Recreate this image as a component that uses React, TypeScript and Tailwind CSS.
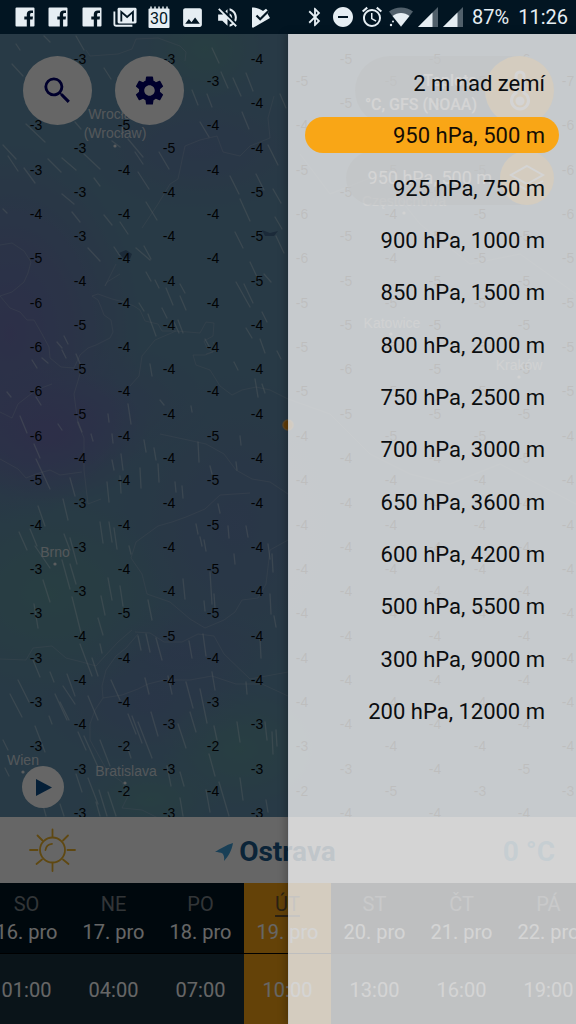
import React from "react";
import {
  MdAlarm,
  MdBluetooth,
  MdDoNotDisturbOn,
  MdImage,
  MdSearch,
  MdSettings,
  MdVolumeOff,
} from "react-icons/md";

const levels = [
  "2 m nad zemí",
  "950 hPa, 500 m",
  "925 hPa, 750 m",
  "900 hPa, 1000 m",
  "850 hPa, 1500 m",
  "800 hPa, 2000 m",
  "750 hPa, 2500 m",
  "700 hPa, 3000 m",
  "650 hPa, 3600 m",
  "600 hPa, 4200 m",
  "500 hPa, 5500 m",
  "300 hPa, 9000 m",
  "200 hPa, 12000 m",
];

const days = [
  { day: "SO", date: "16. pro", time: "01:00" },
  { day: "NE", date: "17. pro", time: "04:00" },
  { day: "PO", date: "18. pro", time: "07:00" },
  { day: "ÚT", date: "19. pro", time: "10:00", active: true },
  { day: "ST", date: "20. pro", time: "13:00" },
  { day: "ČT", date: "21. pro", time: "16:00" },
  { day: "PÁ", date: "22. pro", time: "19:00" },
];

// Temperature columns; every second column is shifted half a row down.
const columns: { x: number; y: number; first?: number; t: number[] }[] = [
  { x: 36, y: 47, first: 1, t: [3, 3, 4, 5, 6, 6, 6, 6, 5, 4, 3, 3, 3, 3, 3] },
  { x: 80, y: 25, t: [3, 3, 3, 3, 3, 4, 5, 5, 5, 4, 3, 3, 3, 4, 4, 4, 3, 3] },
  { x: 124, y: 47, t: [4, 5, 4, 4, 4, 4, 4, 4, 4, 4, 4, 4, 5, 4, 4, 2, 2] },
  { x: 169, y: 25, t: [3, 4, 5, 4, 4, 4, 4, 4, 4, 4, 4, 4, 4, 5, 4, 3, 3, 3] },
  { x: 213, y: 47, t: [3, 4, 4, 4, 4, 4, 4, 4, 5, 5, 5, 5, 5, 4, 3, 2, 4] },
  { x: 257, y: 25, t: [4, 4, 4, 5, 5, 5, 4, 4, 4, 4, 4, 4, 4, 4, 4, 3, 3, 3] },
  { x: 302, y: 47, t: [5, 4, 5, 6, 6, 5, 5, 5, 4, 4, 4, 4, 4, 4, 4, 3, 2] },
  { x: 346, y: 25, t: [5, 5, 5, 5, 5, 5, 5, 6, 5, 4, 4, 4, 4, 4, 4, 4, 3, 4] },
  { x: 391, y: 47, t: [5, 5, 5, 4, 4, 5, 5, 5, 5, 4, 4, 4, 4, 4, 4, 4, 5] },
  { x: 435, y: 25, t: [5, 5, 5, 5, 5, 5, 5, 5, 5, 4, 4, 4, 4, 4, 4, 4, 4, 4] },
  { x: 480, y: 47, t: [5, 5, 5, 5, 5, 5, 5, 5, 5, 4, 4, 4, 4, 4, 4, 4, 3] },
  { x: 524, y: 25, t: [6, 6, 6, 5, 5, 5, 5, 5, 5, 5, 4, 4, 4, 4, 4, 4, 5, 4] },
  { x: 568, y: 47, t: [7, 6, 6, 6, 5, 5, 5, 5, 4, 4, 4, 4, 4, 4, 4, 4, 3] },
];

const cities = [
  { name: "Wrocław", x: 115, y: 85 },
  { name: "(Wrocław)", x: 115, y: 104, dot: [115, 112] },
  { name: "Brno", x: 55, y: 523, dot: [55, 530] },
  { name: "Wien", x: 23, y: 731, dot: [23, 738] },
  { name: "Bratislava", x: 126, y: 742, dot: [125, 749] },
  { name: "Częstochowa", x: 404, y: 172, dot: [404, 179] },
  { name: "Katowice", x: 392, y: 294, dot: [391, 300] },
  { name: "Kraków", x: 519, y: 336, dot: [519, 343] },
];

// Wind traces: start x, start y, run, drop.
const traces: number[][] = [
  [16, 10, 4, 6], [44, 2, 6, 6], [76, 2, 8, 14], [12, 30, 11, 12], [104, 34, 7, 11],
  [212, 14, 7, 15], [221, 38, 7, 16], [233, 44, 8, 18], [246, 39, 7, 18], [192, 56, 6, 15],
  [207, 60, 5, 13], [242, 78, 7, 17], [280, 60, 6, 14], [200, 88, 9, 15], [26, 90, 19, 18],
  [75, 88, 6, 7], [3, 111, 13, 14], [8, 122, 10, 15], [24, 134, 11, 15], [48, 125, 13, 13],
  [62, 124, 14, 12], [84, 120, 16, 15], [112, 107, 8, 6], [128, 105, 15, 18], [135, 118, 8, 12],
  [159, 118, 10, 17], [138, 138, 11, 17], [230, 142, 9, 18], [256, 140, 8, 16], [268, 111, 10, 20],
  [240, 165, 10, 22], [273, 155, 8, 14], [275, 183, 7, 12], [146, 168, 11, 18], [104, 181, 8, 10],
  [120, 188, 8, 12], [3, 175, 4, 4], [62, 160, 12, 10], [94, 144, 6, 8], [72, 178, 8, 10],
  [88, 214, 12, 13], [114, 213, 6, 9], [136, 214, 14, 12], [144, 212, 7, 13], [235, 198, 8, 16],
  [276, 202, 8, 17], [250, 228, 8, 17], [264, 240, 7, 8], [236, 248, 14, 25], [244, 250, 9, 19],
  [146, 238, 5, 9], [155, 246, 4, 8], [166, 254, 7, 17], [180, 250, 5, 9], [180, 262, 6, 14],
  [139, 269, 5, 8], [162, 274, 5, 10], [148, 280, 8, 22], [178, 286, 5, 13], [174, 288, 5, 11],
  [246, 294, 6, 10], [262, 278, 5, 10], [57, 308, 5, 6], [64, 302, 4, 8], [62, 316, 4, 8],
  [42, 324, 6, 5], [76, 320, 5, 12], [32, 326, 5, 8], [205, 305, 5, 9], [234, 328, 4, 8],
  [260, 305, 5, 14], [277, 317, 4, 8], [150, 330, 2, 12], [255, 345, 3, 18], [262, 350, 3, 9],
  [36, 363, 5, 8], [20, 382, 7, 17], [58, 390, 4, 6], [78, 388, 4, 10], [108, 380, 1, 8],
  [128, 370, 3, 20], [160, 366, 4, 5], [191, 372, 1, 6], [7, 358, 4, 5],
  [91, 400, 2, 7], [112, 400, 1, 9], [144, 406, 2, 12], [154, 414, 2, 12], [198, 408, 1, 20],
  [240, 402, 1, 9], [34, 410, 6, 14], [36, 425, 14, 30], [112, 426, 2, 10], [121, 420, 2, 16],
  [140, 434, 1, 20], [158, 430, 1, 18], [175, 448, 1, 10], [182, 452, 1, 12], [70, 444, 5, 18],
  [107, 448, 2, 20], [120, 442, 1, 17], [210, 432, 2, 8], [236, 428, 1, 8], [63, 465, 5, 21],
  [38, 472, 7, 20], [100, 488, 3, 21], [109, 488, 3, 20], [114, 494, 3, 21], [19, 498, 8, 18],
  [30, 495, 7, 17], [64, 500, 6, 16], [218, 470, 2, 9], [228, 492, 1, 12], [246, 492, 2, 11],
  [196, 490, 2, 10], [200, 503, 2, 9], [204, 506, 2, 11], [129, 512, 2, 8], [234, 520, 1, 10],
  [35, 512, 15, 22], [70, 504, 7, 26], [268, 510, 2, 15], [272, 520, 1, 18], [43, 546, 7, 22],
  [62, 526, 8, 29], [70, 530, 6, 20], [108, 544, 4, 22], [120, 552, 3, 20], [183, 545, 2, 20],
  [210, 538, 2, 32], [214, 560, 1, 14], [204, 567, 1, 10], [101, 562, 4, 19], [148, 566, 4, 20],
  [72, 563, 9, 36], [34, 570, 4, 24], [98, 584, 5, 17], [270, 560, 1, 20], [274, 582, 2, 11],
  [138, 602, 3, 14], [146, 600, 4, 18], [156, 604, 6, 22], [189, 607, 3, 17], [203, 600, 3, 22],
  [260, 604, 1, 20], [100, 610, 2, 9], [80, 610, 12, 32], [92, 624, 6, 18], [33, 626, 7, 17],
  [18, 646, 11, 22], [10, 660, 12, 23], [50, 638, 4, 10], [63, 652, 12, 18], [67, 640, 8, 22],
  [55, 660, 12, 26], [60, 668, 9, 18], [88, 662, 10, 24], [111, 646, 9, 20], [145, 644, 4, 16],
  [168, 642, 4, 18], [212, 638, 3, 18], [186, 648, 7, 26], [200, 655, 7, 34], [246, 648, 1, 12],
  [190, 678, 6, 20], [151, 678, 7, 24], [128, 680, 8, 20], [138, 688, 14, 36], [132, 682, 10, 27],
  [178, 690, 8, 24], [214, 692, 3, 14], [237, 688, 3, 20], [265, 688, 2, 18], [272, 698, 1, 22],
  [276, 696, 1, 16], [49, 682, 3, 8], [35, 692, 10, 26], [3, 706, 5, 10], [78, 698, 8, 18],
  [84, 702, 14, 31], [100, 706, 10, 26], [127, 712, 4, 12], [209, 720, 6, 22], [5, 734, 4, 8],
  [76, 740, 6, 18], [88, 744, 10, 26], [167, 732, 4, 20], [180, 738, 4, 14], [219, 748, 10, 34],
  [240, 744, 3, 22], [206, 756, 4, 22], [99, 756, 8, 26], [108, 758, 8, 24], [180, 764, 3, 18],
  [266, 766, 2, 12], [40, 760, 6, 22], [96, 768, 4, 14], [60, 770, 4, 12],
];

const borders = [
  "M86 16 L90 22 118 20 132 15 136 5 158 4 180 12 186 18 185 27",
  "M0 211 L12 209 24 217 31 228 28 239 24 248 12 258 0 262 10 274 20 278 27 286 34 286 42 300 49 313 50 324 61 333 74 334 80 321 88 314 96 311 110 304 113 298 111 286 104 281 101 273 98 266 92 262 98 260 112 265 124 268 134 272 140 276 145 287 158 290 162 297 176 297 200 299 206 288 214 289 213 302 204 307 207 314 213 318 205 321 193 321 196 331 210 336 220 352 232 361 242 356 256 353 270 356 288 365",
  "M206 320 L218 316 213 308",
  "M176 297 L155 306 142 322 139 342 130 352",
  "M80 340 L74 360 78 390 84 404 84 436 88 470 101 465",
  "M120 240 L107 248 105 252 116 230",
  "M0 425 L18 435 26 444 36 440 50 436 60 441 82 438",
  "M160 400 L188 406 206 410 224 420 236 436 252 445 270 448 288 460",
  "M250 459 L220 461 205 475 186 483 172 488 158 492 136 508 131 524 142 540 147 560 170 568 190 585 205 594 224 586 235 578 242 566 258 564 266 550 270 516 288 506",
  "M135 598 L150 599 164 608 182 608 198 600 214 602 224 620 250 645 288 638",
  "M0 625 L26 626 33 614 52 612 66 624 82 628 96 632 105 622 118 608 132 596",
  "M138 600 L126 614 116 622 106 636 102 652 103 664 95 676 90 690 90 706 100 724 108 738 122 748 128 762 122 774 142 776 158 784",
  "M103 664 L122 661 138 655 148 650 164 646 190 646 212 642 236 650 262 650 288 662",
  "M178 145 L185 112 200 106 217 102 223 118 240 122 250 112 270 104 268 84 274 62",
  "M178 145 L170 150 158 170 142 194",
  "M0 378 L12 384 18 370 36 356 52 350",
  "M300 120 L330 160 380 140 420 190 470 230 520 220 576 260",
  "M288 365 L330 380 370 420 410 440 450 450 500 430 576 470",
];

function WeatherMap() {
  return (
    <svg
      className="absolute inset-0 h-full w-full"
      viewBox="0 0 576 783"
      preserveAspectRatio="xMinYMin slice"
      role="img"
      aria-label="Mapa teplot"
    >
      <defs>
        <radialGradient id="purple">
          <stop offset="0" stopColor="#7272b6" stopOpacity="0.85" />
          <stop offset="0.5" stopColor="#7272b6" stopOpacity="0.5" />
          <stop offset="1" stopColor="#7272b6" stopOpacity="0" />
        </radialGradient>
        <radialGradient id="green">
          <stop offset="0" stopColor="#64a0a4" stopOpacity="0.8" />
          <stop offset="1" stopColor="#64a0a4" stopOpacity="0" />
        </radialGradient>
        <radialGradient id="blue">
          <stop offset="0" stopColor="#6a84b4" stopOpacity="0.8" />
          <stop offset="1" stopColor="#6a84b4" stopOpacity="0" />
        </radialGradient>
      </defs>
      <rect width="576" height="783" fill="#6491ae" />
      <ellipse cx="200" cy="115" rx="120" ry="60" fill="url(#blue)" />
      <ellipse cx="10" cy="300" rx="130" ry="190" fill="url(#purple)" />
      <ellipse cx="100" cy="370" rx="110" ry="60" fill="url(#blue)" />
      <ellipse cx="50" cy="400" rx="100" ry="70" fill="url(#purple)" />
      <ellipse cx="235" cy="490" rx="120" ry="150" fill="url(#blue)" />
      <ellipse cx="180" cy="620" rx="100" ry="50" fill="url(#blue)" />
      <ellipse cx="150" cy="670" rx="110" ry="60" fill="url(#blue)" />
      <ellipse cx="205" cy="15" rx="60" ry="50" fill="url(#green)" />
      <ellipse cx="50" cy="560" rx="130" ry="100" fill="url(#green)" />
      <ellipse cx="240" cy="715" rx="80" ry="60" fill="url(#green)" />
      <ellipse cx="150" cy="765" rx="70" ry="35" fill="url(#green)" />
      <path d="M119 219 l7 -3 6 4 -2 5 -7 -1z M262 196 l8 3 8 -2 -4 5 -9 0z" fill="#44698f" />
      {borders.map((d) => (
        <path key={d} d={d} fill="none" stroke="#a5b8cc" strokeOpacity="0.38" strokeWidth="1" strokeLinejoin="round" />
      ))}
      {traces.map(([x, y, dx, dy]) => (
        <line
          key={`${x}-${y}`}
          x1={x}
          y1={y}
          x2={x + dx}
          y2={y + dy}
          stroke="#d6e6ee"
          strokeOpacity="0.4"
          strokeWidth="1.3"
          strokeLinecap="round"
        />
      ))}
      <g fontFamily="'Liberation Sans', Arial, sans-serif" fontSize="14" textAnchor="middle">
        {columns.map((c) =>
          c.t.map((t, i) => (
            <text
              key={`${c.x}-${i}`}
              x={c.x}
              y={c.y + Math.round((i + (c.first ?? 0)) * 44.35) + 5}
              fill="#05080c"
            >
              -{t}
            </text>
          )),
        )}
        {cities.map((c) => (
          <g key={c.name} fill="#e4e8ec">
            <text x={c.x} y={c.y} fillOpacity="0.85">
              {c.name}
            </text>
            {c.dot && <circle cx={c.dot[0]} cy={c.dot[1]} r="1.6" />}
          </g>
        ))}
      </g>
      <circle cx="288" cy="391" r="5" fill="#f59a18" stroke="#e8b060" strokeWidth="1.5" />
    </svg>
  );
}

function FacebookIcon() {
  return (
    <svg viewBox="0 0 24 24" className="h-6 w-6">
      <path
        fill="currentColor"
        d="M3.5 2.5h17a1 1 0 0 1 1 1v17a1 1 0 0 1-1 1h-3.4v-7h2.5l.4-3h-2.9V9.600c0-.9.4-1.500 1.500-1.500H20V5.400h-2.300c-2.500 0-3.900 1.600-3.900 3.900v2.200h-2.500v3h2.500v7H3.500a1 1 0 0 1-1-1v-17a1 1 0 0 1 1-1z"
      />
    </svg>
  );
}

function MailStackIcon() {
  return (
    <svg viewBox="0 0 26 24" className="h-6 w-6">
      <path d="M1.500 6v13.500a2 2 0 0 0 2 2H21" fill="none" stroke="currentColor" strokeWidth="2" />
      <rect x="5" y="2" width="20.500" height="17" rx="1.500" fill="currentColor" />
      <path d="M9 17V6.500l6.300 5.500 6.300-5.500V17" fill="none" stroke="#021522" strokeWidth="2" />
    </svg>
  );
}

function CalendarIcon() {
  return (
    <svg viewBox="0 0 24 24" className="h-6 w-6">
      <rect x="1.500" y="3.500" width="21" height="19.500" rx="1" fill="currentColor" />
      <path d="M4 1.500v3M8 1.500v3M12 1.500v3M16 1.500v3M20 1.500v3" stroke="currentColor" strokeWidth="1.500" />
      <text x="12" y="19" fontSize="16" textAnchor="middle" fill="#021522" fontFamily="Roboto, sans-serif">
        30
      </text>
    </svg>
  );
}

function PlayCheckIcon() {
  return (
    <svg viewBox="0 0 24 24" className="h-6 w-6">
      <path d="M3 2.500c4 0 8 1.500 11 3.500l3-2.200 3 3-1.500 2L21 13 4.500 22.500c-1 .5-1.500 0-1.500-1z" fill="currentColor" />
      <path d="M7.500 10.500l3.700 3.700L19.500 6" fill="none" stroke="#021522" strokeWidth="2.200" />
    </svg>
  );
}

function WifiIcon() {
  return (
    <svg viewBox="0 0 24 20" className="h-5 w-6">
      <path d="M0 4.500C7-1 17-1 24 4.500L12 20z" fill="currentColor" opacity="0.35" />
      <path d="M3.500 9C8.500 5 15.500 5 20.500 9L12 19.500z" fill="currentColor" />
      <circle cx="2" cy="18" r="1.200" fill="currentColor" />
      <circle cx="4" cy="14.500" r="1" fill="currentColor" />
    </svg>
  );
}

function SignalIcon() {
  return (
    <svg viewBox="0 0 20 20" className="h-5 w-5">
      <path d="M20 0V20H0z" fill="currentColor" opacity="0.35" />
      <path d="M14.500 5.500V20H0z" fill="currentColor" />
    </svg>
  );
}

function StatusBar() {
  return (
    <header className="flex h-[34px] shrink-0 items-center justify-between bg-[#021522] pl-[13px] pr-2 text-[#e6eef3]">
      <div className="flex w-[260px] items-center justify-between">
        <FacebookIcon />
        <FacebookIcon />
        <FacebookIcon />
        <MailStackIcon />
        <CalendarIcon />
        <MdImage size={25} />
        <MdVolumeOff size={25} />
        <PlayCheckIcon />
      </div>
      <div className="flex items-center gap-[5px]">
        <MdBluetooth size={22} />
        <MdDoNotDisturbOn size={24} />
        <MdAlarm size={24} />
        <WifiIcon />
        <SignalIcon />
        <SignalIcon />
        <span className="px-1 text-xl leading-6">87%</span>
        <span className="text-xl leading-6">11:26</span>
      </div>
    </header>
  );
}

function SunIcon() {
  return (
    <svg viewBox="0 0 48 48" className="h-12 w-12" fill="none" stroke="#eeb42d" strokeWidth="1.800" strokeLinecap="round">
      <circle cx="24.500" cy="24" r="12.500" />
      <path d="M17.500 24a7.200 7.200 0 0 1 6.500-6.200" />
      <path d="M24.500 3.500v7.500M24.500 37v8M2 24h7.500M39.500 24h7.500M9.500 9.500l5 5M35 33.500l5.500 4.500M40 9.500l-5 5M14 33.500l-5.500 4.500" />
    </svg>
  );
}

function LocationArrow() {
  return (
    <svg viewBox="0 0 18 18" className="size-[18px]" fill="#3f9fd8">
      <path d="M18 0C17 7 13 14 9 18 9.500 15 9 12 7.500 10.500 5.500 9.500 3 9 0 9 5 6 11 2 18 0z" />
    </svg>
  );
}

function LevelDrawer() {
  return (
    <aside
      aria-label="Výška"
      className="absolute inset-y-0 right-0 w-1/2 border-l border-[#a9b4c4]/40 bg-[#f4f4f4]/78 pl-4 pr-[17px] pt-[31px] shadow-[-2px_0_8px_rgba(0,0,0,0.25)]"
    >
      <ul className="flex h-[664px] flex-col justify-between">
        {levels.map((level, i) => (
          <li key={level}>
            <button
              type="button"
              aria-pressed={i === 1}
              className={
                i === 1
                  ? "h-9 w-full rounded-full bg-[#f9a616] pr-[14px] pt-px text-right text-[22px] leading-9 text-[#140d05]"
                  : "h-9 w-full rounded-full pr-[14px] pt-px text-right text-[22px] leading-9 text-[#0b0d0f]"
              }
            >
              {level}
            </button>
          </li>
        ))}
      </ul>
    </aside>
  );
}

export default function App() {
  return (
    <div className="flex min-h-screen flex-col overflow-hidden bg-[#021522] font-[Roboto,sans-serif]">
      <StatusBar />
      <div className="relative flex flex-1 flex-col">
        <main className="relative flex flex-1 flex-col justify-between overflow-hidden">
          <WeatherMap />
          <div className="relative flex items-start justify-between pl-[23px] pr-[22px] pt-[22px]">
            <div className="flex gap-[23px]">
              <button type="button" aria-label="Hledat" className="grid size-[69px] place-items-center rounded-full bg-white text-[#00006e]">
                <MdSearch size={35} />
              </button>
              <button type="button" aria-label="Nastavení" className="grid size-[69px] place-items-center rounded-full bg-white text-[#00006e]">
                <MdSettings size={35} />
              </button>
            </div>
            <div className="flex flex-col items-end gap-[26px]">
              <button type="button" className="flex h-[69px] items-center rounded-full bg-[#2c4658]/60 text-white">
                <span className="w-[130px] pr-2 pt-1 text-right text-base leading-6 font-medium">
                  Teplota
                  <br />
                  °C, GFS (NOAA)
                </span>
                <span className="grid size-[69px] place-items-center rounded-full bg-[#f9a616]">
                  <svg viewBox="0 0 24 44" className="h-11 w-6" fill="none" stroke="white" strokeWidth="3">
                    <path d="M8 24V7a4 4 0 0 1 8 0v17a8.500 8.500 0 1 1-8 0z" />
                    <circle cx="12" cy="32" r="3" fill="white" />
                  </svg>
                </span>
              </button>
              <button type="button" className="flex h-[54px] items-center rounded-full bg-[#2c4658]/60 text-white">
                <span className="w-[154px] pr-2 text-right text-lg leading-6">950 hPa, 500 m</span>
                <span className="grid size-[54px] place-items-center rounded-full bg-[#f9a616]">
                  <svg viewBox="0 0 36 36" className="size-9" fill="none" stroke="white" strokeWidth="2">
                    <path d="M18 6L34 15 18 24 2 15z M2 21l16 9 16-9" />
                  </svg>
                </span>
              </button>
            </div>
          </div>
          <button
            type="button"
            aria-label="Přehrát"
            className="relative mb-[9px] ml-[22px] grid size-[42px] place-items-center rounded-full bg-white"
          >
            <svg viewBox="0 0 16 17" className="ml-px h-[17px] w-4">
              <path d="M0 0L16 8.500 0 17z" fill="#0d4f8b" />
            </svg>
          </button>
        </main>

        <section className="grid h-[66px] shrink-0 grid-cols-[1fr_auto_1fr] items-center bg-white px-[21px] pl-7 text-[28px] font-bold text-[#1c5a8c]">
          <SunIcon />
          <h1 className="flex items-center gap-[6px] pr-8 pt-[3px]">
            <LocationArrow />
            Ostrava
          </h1>
          <span className="justify-self-end pt-[3px] text-[#5fb4e0]">0 °C</span>
        </section>

        <nav aria-label="Den a čas" className="flex shrink-0 justify-center overflow-hidden bg-[#19323f] pr-px">
          {days.map((d) => (
            <button
              type="button"
              key={d.day}
              className={
                d.active
                  ? "w-[87px] shrink-0 bg-[#f9a616] text-xl text-white"
                  : "w-[87px] shrink-0 text-xl text-white"
              }
            >
              <span
                className={
                  d.active
                    ? "flex h-[71px] flex-col items-center justify-center border-b border-black leading-7"
                    : "flex h-[71px] flex-col items-center justify-center border-b border-black bg-[#021522] leading-7"
                }
              >
                <span className={d.active ? "text-[#6b5430] underline underline-offset-4" : "text-[#7d858b]"}>{d.day}</span>
                <span>{d.date}</span>
              </span>
              <span className="flex h-[70px] items-center justify-center pt-px">{d.time}</span>
            </button>
          ))}
        </nav>

        <div className="pointer-events-none absolute inset-0 bg-black/60" />
        <LevelDrawer />
      </div>
    </div>
  );
}
